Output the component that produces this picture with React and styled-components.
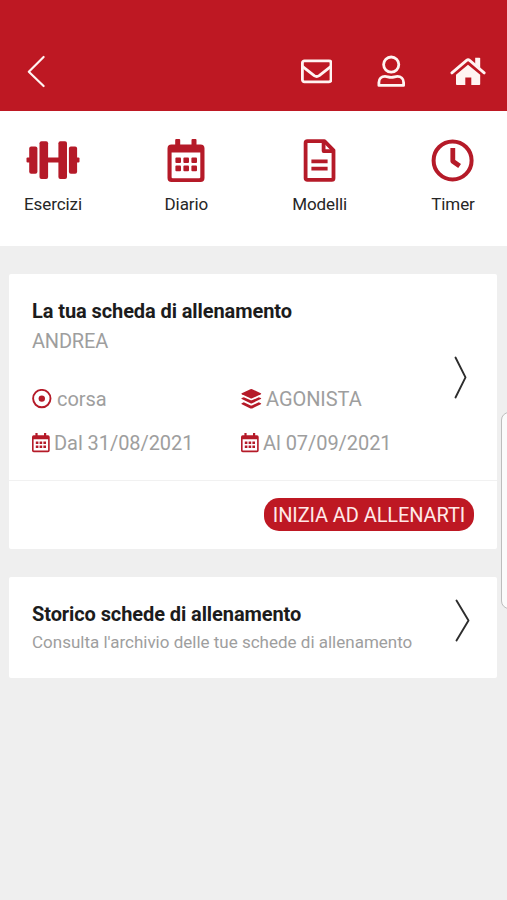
import React from 'react';
import styled, { createGlobalStyle } from 'styled-components';

const GlobalStyle = createGlobalStyle`
  * {
    box-sizing: border-box;
  }
  body {
    margin: 0;
    background: #efefef;
    font-family: Roboto, "Liberation Sans", sans-serif;
  }
  svg {
    display: block;
    flex: none;
  }
`;

const Page = styled.div`
  position: relative;
  min-height: 900px;
  overflow: hidden;
  background: #efefef;
`;

const Header = styled.header`
  display: flex;
  justify-content: space-between;
  align-items: flex-end;
  height: 111px;
  padding: 0 21px 22px 26px;
  background: #be1823;
  color: #fff4f2;
`;

const HeaderActions = styled.div`
  display: flex;
  gap: 41px;
`;

const Menu = styled.nav`
  display: flex;
  justify-content: space-between;
  height: 135px;
  padding: 26px 14px 0 13px;
  background: #fff;
`;

const MenuItem = styled.div`
  display: flex;
  flex-direction: column;
  align-items: center;
  width: 80px;
  color: #b51a28;
`;

const MenuLabel = styled.span`
  margin-top: 8px;
  font-size: 17px;
  line-height: 26px;
  letter-spacing: -0.1px;
  color: #262626;
`;

const Card = styled.section`
  margin: 28px 10px 0 9px;
  border-radius: 2px;
  background: #fff;
`;

const CardBody = styled.div`
  display: flex;
  justify-content: space-between;
  align-items: ${({ $align }) => $align || 'center'};
  height: ${({ $height }) => $height};
  padding: 22px 27px 0 23px;
`;

const CardContent = styled.div`
  flex: 1;
  align-self: flex-start;
  white-space: nowrap;
`;

const Title = styled.h2`
  margin: 0;
  font-size: 20px;
  font-weight: 700;
  line-height: 30px;
  letter-spacing: -0.09px;
  color: #1c1c1c;
`;

const Subtitle = styled.p`
  margin: 0;
  font-size: ${({ $small }) => ($small ? '17px' : '20px')};
  line-height: ${({ $small }) => ($small ? '26px' : '30px')};
  letter-spacing: ${({ $small }) => ($small ? 'normal' : '-0.2px')};
  color: #9e9e9e;
`;

const MetaGrid = styled.div`
  display: grid;
  grid-template-columns: 209px 1fr;
  margin-top: 21px;
`;

const Meta = styled.div`
  display: flex;
  align-items: center;
  gap: ${({ $gap }) => $gap || '4px'};
  height: 44px;
  font-size: 20px;
  line-height: 44px;
  letter-spacing: -0.06px;
  color: #9e9e9e;

  svg {
    color: #b51a28;
  }
`;

const Arrow = styled.div`
  margin: ${({ $margin }) => $margin || '0'};
`;

const CardFooter = styled.div`
  display: flex;
  justify-content: flex-end;
  height: 69px;
  padding: 17px 23px 0;
  border-top: 1px solid #f1f1f1;
`;

const StartButton = styled.button`
  width: 210px;
  height: 33px;
  padding: 0;
  border: 0;
  border-radius: 15px;
  background: #be1823;
  font-family: inherit;
  font-size: 20px;
  line-height: 32px;
  letter-spacing: -0.1px;
  white-space: nowrap;
  color: #ffe9e8;
`;

// Edge panel handle, floats over the right side of the screen
const EdgeHandle = styled.div`
  position: absolute;
  top: 412px;
  right: -12px;
  width: 18px;
  height: 197px;
  border: 1px solid #bdbdbd;
  border-radius: 8px;
  background: #fbfbfb;
`;

const BackIcon = () => (
  <svg width="20" height="34" viewBox="0 0 20 34" fill="none" stroke="currentColor" strokeWidth="2.2" strokeLinecap="round" strokeLinejoin="round">
    <path d="M17.6 2 2.8 16.8 17.6 31" />
  </svg>
);

const MailIcon = () => (
  <svg width="32" height="34" viewBox="0 0 32 34" fill="none" stroke="currentColor" strokeWidth="2.8" strokeLinejoin="round">
    <rect x="2.4" y="5.8" width="28.6" height="21" rx="2" />
    <path d="M2.4 11.4 14.2 20.7Q16.7 22.4 19.2 20.7L31 11.4" />
  </svg>
);

const UserIcon = () => (
  <svg width="36" height="34" viewBox="0 0 36 34" fill="none" stroke="currentColor" strokeWidth="2.8" strokeLinejoin="round">
    <circle cx="18.2" cy="9.6" r="7.6" />
    <path d="M5.9 30.4V27.4C5.9 23.6 8.6 21.4 12 21.4 14.2 21.4 15.4 22.3 18.2 22.3S22.2 21.4 24.4 21.4C27.8 21.4 30.6 23.6 30.6 27.4V30.4Z" />
  </svg>
);

const HomeIcon = () => (
  <svg width="36" height="34" viewBox="0 0 36 34" fill="currentColor">
    <path d="M18 9.8 30.2 19.8V29.2Q30.2 30 29.4 30H21.3V22.4H15.3V30H7Q6 30 6 29.2V19.8Z" />
    <path d="M1.9 17.9 16.6 5.4Q18.1 4.2 19.6 5.4L34.2 17.9" fill="none" stroke="currentColor" strokeWidth="2.8" strokeLinecap="round" strokeLinejoin="round" />
    <path d="M25.2 2.8H29.4Q30.2 2.8 30.2 3.6V13.2L25.2 9Z" />
  </svg>
);

const DumbbellIcon = () => (
  <svg width="54" height="46" viewBox="0 0 54 46" fill="currentColor">
    <rect x=".5" y="20.5" width="4" height="5" rx="1" />
    <rect x="49.5" y="20.5" width="4" height="5" rx="1" />
    <rect x="3.2" y="9.6" width="8.2" height="27.2" rx="2" />
    <rect x="13.5" y="4.3" width="8.6" height="37.8" rx="2" />
    <rect x="21" y="20.5" width="12" height="5" />
    <rect x="32.4" y="4.3" width="8.6" height="37.8" rx="2" />
    <rect x="42.9" y="9.6" width="8.2" height="27.2" rx="2" />
  </svg>
);

const CalendarIcon = () => (
  <svg width="38" height="46" viewBox="0 0 38 46" fill="currentColor">
    <path fillRule="evenodd" d="M8.2 3Q8.2 2 9.2 2H12.2Q13.2 2 13.2 3V7.5H24.5V3Q24.5 2 25.5 2H28.5Q29.5 2 29.5 3V7.5H33.5Q37.5 7.5 37.5 11.5V41Q37.5 45 33.5 45H4.5Q.5 45 .5 41V11.5Q.5 7.5 4.5 7.5H8.2ZM4.6 15.4V40.2Q4.6 41.3 5.7 41.3H32.2Q33.3 41.3 33.3 40.2V15.4Z" />
    <rect x="8.4" y="20.4" width="5.6" height="5.6" rx="1" />
    <rect x="16.4" y="20.4" width="5.6" height="5.6" rx="1" />
    <rect x="24.4" y="20.4" width="5.6" height="5.6" rx="1" />
    <rect x="8.4" y="28.6" width="5.6" height="5.6" rx="1" />
    <rect x="16.4" y="28.6" width="5.6" height="5.6" rx="1" />
    <rect x="24.4" y="28.6" width="5.6" height="5.6" rx="1" />
  </svg>
);

const FileIcon = () => (
  <svg width="34" height="46" viewBox="0 0 34 46" fill="none" stroke="currentColor" strokeWidth="3.8" strokeLinejoin="round">
    <path d="M4.4 4.2H21.4L30.5 13.3V41.2Q30.5 42.9 28.8 42.9H4.4Q2.6 42.9 2.6 41.2V6Q2.6 4.2 4.4 4.2Z" />
    <path d="M20.6 4.5V14.1H30.4" />
    <path d="M8.4 24.4H24.6M8.4 31.6H24.6" />
  </svg>
);

const ClockIcon = () => (
  <svg width="44" height="46" viewBox="0 0 44 46" fill="none" stroke="currentColor" strokeWidth="4">
    <circle cx="21.6" cy="23.4" r="19" />
    <path d="M21.8 11V24.2L28.6 29" strokeWidth="4.8" strokeLinejoin="round" />
  </svg>
);

const TargetIcon = () => (
  <svg width="20" height="20" viewBox="0 0 20 20">
    <circle cx="9.8" cy="9.6" r="8.7" fill="none" stroke="currentColor" strokeWidth="1.9" />
    <circle cx="9.8" cy="9.6" r="3.2" fill="currentColor" />
  </svg>
);

const LayersIcon = () => (
  <svg width="21" height="20" viewBox="0 0 21 20" fill="currentColor">
    <path d="M9.4.2Q10.3-.1 11.2.2L19.8 4.3Q20.6 4.8 19.8 5.3L11.2 9.3Q10.3 9.7 9.4 9.3L.8 5.3Q0 4.8 .8 4.3Z" />
    <path d="M.8 9.1 2.8 8.2 9.2 11.1Q10.3 11.6 11.4 11.1L17.8 8.2 19.8 9.1Q20.6 9.6 19.8 10.1L11.2 14.2Q10.3 14.6 9.4 14.2L.8 10.1Q0 9.6 .8 9.1Z" />
    <path d="M.8 14.2 2.8 13.3 9.2 16.2Q10.3 16.7 11.4 16.2L17.8 13.3 19.8 14.2Q20.6 14.7 19.8 15.2L11.2 19.4Q10.3 19.8 9.4 19.4L.8 15.2Q0 14.7 .8 14.2Z" />
  </svg>
);

// The dots blur together when the big calendar is scaled down, so this one has its own grid
const SmallCalendarIcon = () => (
  <svg width="18" height="20" viewBox="0 0 18 20" fill="currentColor">
    <path fillRule="evenodd" d="M3.4 0H5.6V2.2H12V0H14.2V2.2H16Q17.7 2.2 17.7 4V17.4Q17.7 19.2 16 19.2H1.7Q0 19.2 0 17.4V4Q0 2.2 1.7 2.2H3.4ZM1.6 6.2V17.6H16.1V6.2Z" />
    <path d="M3.8 8.6H6.4V11.1H3.8ZM7.6 8.6H10.2V11.1H7.6ZM11.4 8.6H14V11.1H11.4ZM3.8 12.6H6.4V15.1H3.8ZM7.6 12.6H10.2V15.1H7.6ZM11.4 12.6H14V15.1H11.4Z" />
  </svg>
);

const ArrowIcon = ({ width }) => (
  <svg width={width} height="43" viewBox={`0 0 ${width} 43`} fill="none" stroke="#2d2d2d" strokeWidth="1.9" strokeLinecap="round" strokeLinejoin="round">
    <path d={`M1.5 1.5 ${width - 1.5} 21.4 1.5 41.5`} />
  </svg>
);

const menuItems = [
  { label: 'Esercizi', icon: <DumbbellIcon /> },
  { label: 'Diario', icon: <CalendarIcon /> },
  { label: 'Modelli', icon: <FileIcon /> },
  { label: 'Timer', icon: <ClockIcon /> },
];

const App = () => {
  return (
    <Page>
      <GlobalStyle />
      <Header>
        <BackIcon />
        <HeaderActions>
          <MailIcon />
          <UserIcon />
          <HomeIcon />
        </HeaderActions>
      </Header>
      <Menu>
        {menuItems.map(({ label, icon }) => (
          <MenuItem key={label}>
            {icon}
            <MenuLabel>{label}</MenuLabel>
          </MenuItem>
        ))}
      </Menu>
      <Card>
        <CardBody $height="206px">
          <CardContent>
            <Title>La tua scheda di allenamento</Title>
            <Subtitle>ANDREA</Subtitle>
            <MetaGrid>
              <Meta $gap="5px">
                <TargetIcon />
                corsa
              </Meta>
              <Meta>
                <LayersIcon />
                AGONISTA
              </Meta>
              <Meta>
                <SmallCalendarIcon />
                Dal 31/08/2021
              </Meta>
              <Meta>
                <SmallCalendarIcon />
                Al 07/09/2021
              </Meta>
            </MetaGrid>
          </CardContent>
          <Arrow $margin="-22px 3px 0 0">
            <ArrowIcon width={13} />
          </Arrow>
        </CardBody>
        <CardFooter>
          <StartButton>INIZIA AD ALLENARTI</StartButton>
        </CardFooter>
      </Card>
      <Card>
        <CardBody $height="101px" $align="flex-start">
          <CardContent>
            <Title>Storico schede di allenamento</Title>
            <Subtitle $small>Consulta l'archivio delle tue schede di allenamento</Subtitle>
          </CardContent>
          <Arrow>
            <ArrowIcon width={15} />
          </Arrow>
        </CardBody>
      </Card>
      <EdgeHandle />
    </Page>
  );
};

export default App;
